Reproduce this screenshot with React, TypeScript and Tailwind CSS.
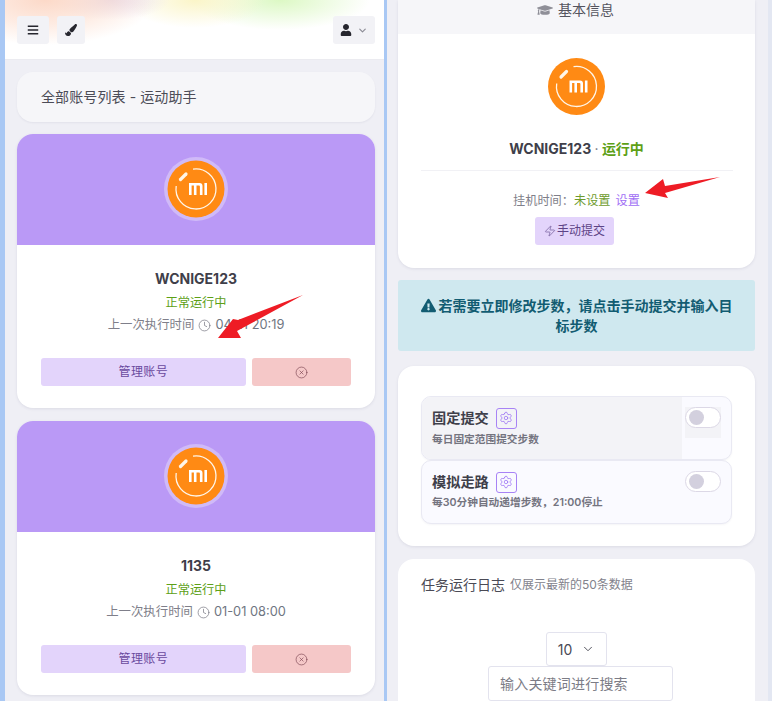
import React from "react";
import { Clock, CircleX, Zap, Settings, ChevronDown } from "lucide-react";
import { FaBars, FaPaintBrush, FaUser, FaGraduationCap, FaExclamationTriangle } from "react-icons/fa";

function MiLogo({ size, ring }: { size: number; ring?: boolean }) {
  return (
    <svg width={size} height={size} viewBox={ring ? "0 0 64 64" : "3.5 3.5 57 57"} className="block">
      {ring && <circle cx="32" cy="32" r="32" fill="#d0baf8" />}
      <circle cx="32" cy="32" r="28.5" fill="#ff8a14" />
      <path d="M29 12.2 A 20 20 0 1 1 12.2 29" fill="none" stroke="#fff5e8" strokeWidth="1.3" />
      <path d="M16.5 22.5 L22 17" stroke="#fff5e8" strokeWidth="3.2" strokeLinecap="round" />
      <path d="M25 26h10.5a3 3 0 0 1 3 3v9h-2.6v-8.6a.9.9 0 0 0-.9-.9h-2.5V38h-2.6v-9.5h-2.3V38H25zM40.4 26H43v12h-2.6z" fill="#fff" />
    </svg>
  );
}

function AccountCard({ name, time }: { name: string; time: string }) {
  return (
    <div className="mt-[13px] h-[274px] shrink-0 overflow-hidden rounded-2xl bg-white shadow-[0_1px_3px_rgba(80,80,120,0.12)]">
      <div className="flex h-[111px] items-center justify-center bg-[#ba99f6] pb-[1px]">
        <MiLogo size={64} ring />
      </div>
      <div className="flex flex-col items-center pt-[24px]">
        <div className="text-[14px] font-bold leading-[20px] text-[#3f3f4a]">{name}</div>
        <div className="mt-[5px] text-[12.2px] leading-[18px] text-[#5da016]">正常运行中</div>
        <div className="mt-[4px] flex items-center text-[12.4px] leading-[18px] text-[#7f7f8a]">
          上一次执行时间
          <Clock size={13} strokeWidth={1.4} className="mx-[4px]" />
          <span className="text-[12.8px] text-[#6f7682]">{time}</span>
        </div>
        <div className="mt-[24px] flex w-full gap-[6px] px-[24px]">
          <div className="flex h-[28px] w-[206px] items-center justify-center rounded-[3px] bg-[#e3d4fb] text-[12px] tracking-[0.4px] text-[#6a4a9e]">
            管理账号
          </div>
          <div className="flex h-[28px] w-[100px] items-center justify-center rounded-[3px] bg-[#f5c8c8] text-[#7a4450]">
            <CircleX size={13} strokeWidth={1.2} />
          </div>
        </div>
      </div>
    </div>
  );
}

function FeatureRow({ title, desc, shaded }: { title: string; desc: string; shaded?: boolean }) {
  return (
    <div className="relative flex h-[64px] overflow-hidden rounded-[10px] border border-[#e9e9f3] bg-[#fafaff] shadow-[0_1px_2px_rgba(80,80,120,0.06)]">
      <div className={`h-full w-[260px] pl-[10px] ${shaded ? "bg-[#f3f3f7]" : ""}`}>
        <div className="mt-[10px] flex items-center gap-[7px]">
          <span className="text-[14.2px] font-bold leading-[22px] text-[#3f3f4a]">{title}</span>
          <span className="flex h-[21px] w-[21px] items-center justify-center rounded-[3px] border border-[#a883f5] text-[#9a70f5]">
            <Settings size={14} strokeWidth={1.3} />
          </span>
        </div>
        <div className={`${shaded ? "mt-[3px]" : "mt-[2px]"} text-[10.7px] font-semibold leading-[16px] text-[#74747f]`}>{desc}</div>
      </div>
      <div className={`ml-[3px] mt-[10px] h-[31px] w-[36px] ${shaded ? "bg-[#f3f3f7]" : ""}`}>
        <div className="flex h-[21px] w-[36px] items-center rounded-full border border-[#dcd8e6] bg-white pl-[3px]">
          <span className="h-[15px] w-[15px] rounded-full bg-[#d3d0de]" />
        </div>
      </div>
    </div>
  );
}

export default function App() {
  return (
    <div
      className="relative flex h-[701px] w-[772px] overflow-hidden bg-[#efeff5] text-[#3f3f4a]"
      style={{ fontFamily: '"Inter","Noto Sans CJK SC",sans-serif' }}
    >
      {/* Left pane */}
      <div className="flex h-full w-[387px] shrink-0 flex-col border-l-[5px] border-r-[3px] border-l-[#a9c8f4] border-r-[#a9c8f4] bg-[#efeff5]">
        <div className="relative h-[60px] shrink-0 overflow-hidden border-b border-[#ebebf0] bg-white">
          <div className="absolute inset-0 bg-[radial-gradient(ellipse_110px_45px_at_40px_0px,#fcd9c8_0%,rgba(252,217,200,0.5)_55%,transparent_100%),radial-gradient(ellipse_60px_20px_at_105px_0px,#e7dcec_0%,transparent_100%),radial-gradient(ellipse_70px_28px_at_190px_0px,#fbf5c8_0%,transparent_100%),radial-gradient(ellipse_90px_30px_at_275px_0px,#dcf8c4_0%,transparent_100%)]" />
          <div className="relative flex h-full items-start justify-between pl-[12px] pr-[9px] pt-[16px]">
            <div className="flex gap-[8px]">
              <span className="flex h-[28px] w-[32px] items-center justify-center rounded-[3px] bg-[#f2f2f6] text-[#26262e]">
                <FaBars size={12} />
              </span>
              <span className="flex h-[28px] w-[28px] items-center justify-center rounded-[3px] bg-[#f2f2f6] text-[#26262e]">
                <FaPaintBrush size={12} />
              </span>
            </div>
            <span className="flex h-[28px] w-[42px] items-center justify-center gap-[5px] rounded-[3px] bg-[#f2f2f6] text-[#26262e]">
              <FaUser size={12} />
              <ChevronDown size={11} strokeWidth={2.5} className="text-[#8b8b95]" />
            </span>
          </div>
        </div>
        <div className="flex min-h-0 flex-1 flex-col overflow-hidden px-[12px] pr-[9px] pt-[12px]">
          <div className="flex h-[50px] shrink-0 items-center rounded-2xl bg-[#f6f6f9] pb-[2px] pl-[24px] text-[14px] tracking-[0.1px] text-[#4c4c57] shadow-[0_1px_2px_rgba(80,80,120,0.08)]">
            全部账号列表 - 运动助手
          </div>
          <div className="mt-[-1px]">
            <AccountCard name="WCNIGE123" time="04-11 20:19" />
            <AccountCard name="1135" time="01-01 08:00" />
          </div>
        </div>
      </div>

      {/* Right pane */}
      <div className="flex h-full w-[385px] shrink-0 flex-col border-r-[4px] border-r-[#e3e7f2] bg-[#efeff5] pl-[11px] pr-[13px]">
        <div className="h-[268px] shrink-0 overflow-hidden rounded-b-2xl bg-white shadow-[0_1px_3px_rgba(80,80,120,0.12)]">
          <div className="flex h-[34px] items-start justify-center gap-[5px] bg-[#f6f6f9] pr-[2px] text-[14px] leading-[19px] text-[#54545e]">
            <FaGraduationCap size={16} className="mt-[2px] text-[#8f8f98]" />
            基本信息
          </div>
          <div className="flex flex-col items-center pt-[24px]">
            <MiLogo size={57} />
            <div className="mt-[24px] text-[14px] font-bold leading-[20px] text-[#3f3f4a]">
              WCNIGE123 <span className="font-normal text-[#72727c]">·</span> <span className="text-[#5da016]">运行中</span>
            </div>
            <div className="mt-[11px] h-[1px] w-[312px] bg-[#f1f1f5]" />
            <div className="mt-[21px] text-[12.2px] leading-[18px] text-[#7f7f8a]">
              挂机时间：<span className="text-[#6e9b2d]">未设置</span>
              <span className="ml-[5px] text-[#a06ef5]">设置</span>
            </div>
            <div className="mr-[4px] mt-[7px] flex h-[28px] w-[79px] items-center justify-center gap-[1px] rounded-[3px] bg-[#e3d4fb] text-[12px] text-[#5d4386]">
              <Zap size={12} strokeWidth={1.2} />
              手动提交
            </div>
          </div>
        </div>

        <div className="mt-[12px] flex h-[71px] shrink-0 items-center justify-center rounded-[3px] bg-[#cfe8ef] px-[19px] text-center text-[14px] font-bold leading-[20px] text-[#125c72]">
          <div>
            <FaExclamationTriangle size={15} className="mr-[3px] inline align-[-2px]" />
            若需要立即修改步数，请点击手动提交并输入目标步数
          </div>
        </div>

        <div className="mt-[15px] h-[180px] shrink-0 rounded-2xl bg-white px-[23px] pt-[30px] shadow-[0_1px_3px_rgba(80,80,120,0.12)]">
          <FeatureRow title="固定提交" desc="每日固定范围提交步数" shaded />
          <FeatureRow title="模拟走路" desc="每30分钟自动递增步数，21:00停止" />
        </div>

        <div className="mt-[13px] flex-1 rounded-t-2xl bg-white px-[23px] pt-[16px]">
          <div className="flex items-center gap-[5px]">
            <span className="text-[14px] leading-[20px] text-[#4a4a55]">任务运行日志</span>
            <span className="text-[12px] leading-[20px] text-[#82828c]">仅展示最新的50条数据</span>
          </div>
          <div className="mt-[37px] flex flex-col items-center">
            <div className="flex h-[34px] w-[61px] items-center justify-center gap-[9px] rounded-[3px] border border-[#e3e3ee] text-[14px] text-[#4a4a55]">
              10
              <ChevronDown size={14} strokeWidth={1.6} />
            </div>
            <div className="ml-[8px] flex h-[35px] w-[185px] items-center rounded-[3px] border border-[#e3e3ee] pl-[11px] text-[14px] tracking-[0.2px] text-[#7c7c86]">
              输入关键词进行搜索
            </div>
          </div>
        </div>
      </div>

      {/* Red annotation arrows */}
      <svg className="pointer-events-none absolute left-0 top-0" width="772" height="701" viewBox="0 0 772 701">
        <path d="M303 295 L238 320 L233 319 L218 338 L241 338 L237 331 Z" fill="#ee1c25" />
        <path d="M720 177 L665 186 L663 179 L645 193 L668 198 L665 193 Z" fill="#ee1c25" />
      </svg>
    </div>
  );
}
